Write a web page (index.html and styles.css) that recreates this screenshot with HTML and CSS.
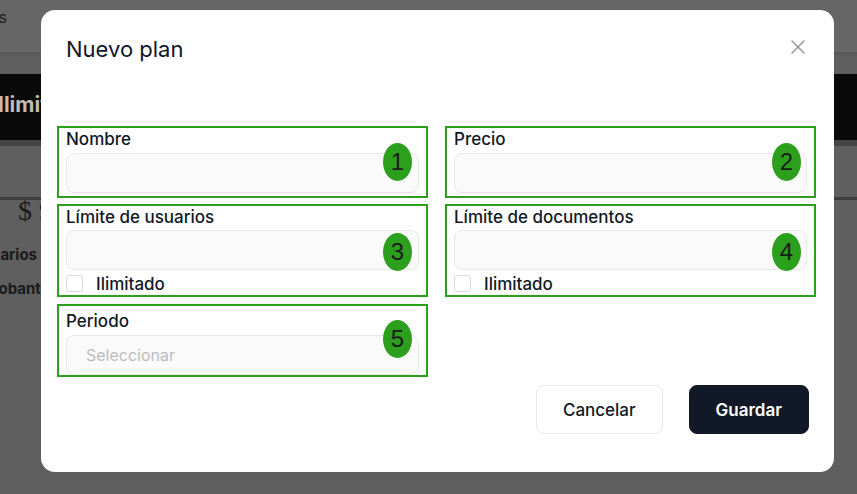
FILE: index.html
```html
<!DOCTYPE html>
<html lang="es">
<head>
<meta charset="utf-8">
<title>Nuevo plan</title>
<link rel="stylesheet" href="styles.css">
</head>
<body>
<div class="page">
  <header class="nav">
    <div class="nav-clip"><span>Planes</span></div>
  </header>
  <section class="card">
    <div class="card-head"><span class="card-title">Ilimitado</span></div>
    <div class="card-body">
      <div class="price">$ 99</div>
      <div class="feat feat-users"><span>Usuarios</span></div>
      <div class="feat feat-docs"><span>Comprobantes</span></div>
    </div>
  </section>
</div>

<div class="modal" role="dialog" aria-labelledby="modal-title">
  <div class="modal-header">
    <h2 id="modal-title" class="modal-title">Nuevo plan</h2>
    <button class="close-btn" aria-label="Cerrar">
      <svg width="14" height="14" viewBox="0 0 14 14" aria-hidden="true">
        <path d="M1 1 L13 13 M13 1 L1 13" stroke="#8a8f98" stroke-width="1.3" fill="none" stroke-linecap="round"/>
      </svg>
    </button>
  </div>

  <form class="form-grid">
    <div class="field">
      <label class="field-label">Nombre</label>
      <input class="text-input" type="text">
      <span class="badge">1</span>
    </div>
    <div class="field field-right">
      <label class="field-label">Precio</label>
      <input class="text-input" type="text">
      <span class="badge">2</span>
    </div>
    <div class="field field-limit">
      <label class="field-label">Límite de usuarios</label>
      <input class="text-input" type="text">
      <label class="check-row"><input type="checkbox" class="check"><span>Ilimitado</span></label>
      <span class="badge badge-low">3</span>
    </div>
    <div class="field field-limit field-right">
      <label class="field-label">Límite de documentos</label>
      <input class="text-input" type="text">
      <label class="check-row"><input type="checkbox" class="check"><span>Ilimitado</span></label>
      <span class="badge badge-low">4</span>
    </div>
    <div class="field field-select">
      <label class="field-label">Periodo</label>
      <div class="text-input select-input">Seleccionar</div>
      <span class="badge">5</span>
    </div>
  </form>

  <div class="modal-footer">
    <button class="btn btn-outline">Cancelar</button>
    <button class="btn btn-primary">Guardar</button>
  </div>
</div>
</body>
</html>
```

FILE: styles.css
```css
* { box-sizing: border-box; }

html, body {
  margin: 0;
  height: 494px;
  overflow: hidden;
}

body {
  background: #5f5f5f;
  font-family: Inter, "Noto Sans", sans-serif;
}

/* ---------- dimmed page behind the dialog ---------- */
.nav {
  height: 55px;
  background: #666666;
  border-bottom: 3px solid #595959;
}

.nav-clip {
  width: 7px;
  overflow: hidden;
  display: flex;
  justify-content: flex-end;
  padding-top: 7px;
  font-size: 16px;
  line-height: 20px;
  color: #1f1f1f;
  white-space: nowrap;
}

.card {
  margin-top: 19px;
}

.card-head {
  height: 72px;
  background: #0a0a0a;
  border-bottom: 6px solid #454545;
  display: flex;
  align-items: center;
  padding-bottom: 6px;
}

.card-title {
  margin-left: -2px;
  font-weight: 700;
  font-size: 21px;
  color: #c2bbb6;
  white-space: nowrap;
}

.card-body {
  margin-top: 51px;
  border-top: 3px solid #3d3d3d;
}

.price {
  padding-left: 18px;
  font-family: "Liberation Serif", serif;
  font-size: 28px;
  line-height: 22px;
  color: #1b1b1b;
  margin-bottom: 16px;
}

.feat {
  overflow: hidden;
  display: flex;
  justify-content: flex-end;
  font-weight: 700;
  font-size: 15px;
  line-height: 34px;
  color: #1a1a1a;
  white-space: nowrap;
}

.feat-users { width: 37px; }
.feat-docs { width: 58px; }

/* ---------- dialog ---------- */
.modal {
  position: fixed;
  left: 41px;
  top: 10px;
  width: 793px;
  height: 462px;
  background: #ffffff;
  border-radius: 14px;
  padding: 25px 25px 0;
}

.modal-header {
  display: flex;
  justify-content: space-between;
  align-items: flex-start;
  height: 28px;
}

.modal-title {
  margin: 0;
  font-size: 22px;
  line-height: 28px;
  font-weight: 400;
  color: #0f172a;
}

.close-btn {
  width: 24px;
  height: 24px;
  margin-right: -1px;
  padding: 0;
  border: 0;
  background: transparent;
  display: flex;
  align-items: center;
  justify-content: center;
}

.form-grid {
  margin: 63px -7px 0 -9px;
  display: grid;
  grid-template-columns: 1fr 1fr;
  column-gap: 17px;
  row-gap: 6px;
}

.field {
  position: relative;
  border: 2px solid #2ca01c;
  padding: 1px 7px 3px;
  display: flex;
  flex-direction: column;
}

.field-label {
  font-size: 17px;
  line-height: 20px;
  font-weight: 500;
  color: #111827;
  margin-bottom: 4px;
}

.text-input {
  width: 100%;
  height: 40px;
  border: 1px solid #e5e7eb;
  border-radius: 8px;
  background: #fafafa;
  font-family: inherit;
  font-size: 16px;
  outline: none;
}

.field-limit .field-label { margin-bottom: 3px; }

.check-row {
  margin-top: 5px;
  height: 17px;
  display: flex;
  align-items: center;
  gap: 13px;
  font-size: 17px;
  font-weight: 500;
  color: #111827;
}

.check {
  appearance: none;
  -webkit-appearance: none;
  margin: 0;
  width: 17px;
  height: 17px;
  border: 1px solid #d9dbe0;
  border-radius: 3px;
  background: #ffffff;
}

.field-select {
  margin-top: 1px;
  padding-top: 5px;
  padding-bottom: 0;
}

.select-input {
  display: flex;
  align-items: center;
  padding-left: 19px;
  color: #bdbdbd;
}

.badge {
  position: absolute;
  top: 15px;
  right: 14px;
  width: 29px;
  height: 38px;
  border-radius: 50%;
  background: #2ca01c;
  display: flex;
  align-items: center;
  justify-content: center;
  font-family: "Liberation Sans", Arial, sans-serif;
  font-size: 24px;
  color: #1c1c1c;
}

.field-right .badge { right: 13px; }
.badge-low { top: 27px; }
.field-select .badge { top: 14px; }

.modal-footer {
  margin-top: 8px;
  display: flex;
  justify-content: flex-end;
  gap: 26px;
}

.btn {
  height: 49px;
  padding: 0 26px;
  border-radius: 8px;
  font-family: inherit;
  font-size: 17px;
  font-weight: 500;
  cursor: pointer;
}

.btn-outline {
  background: #ffffff;
  border: 1px solid #e5e7eb;
  color: #111827;
}

.btn-primary {
  background: #111827;
  border: 1px solid #111827;
  color: #ffffff;
  font-weight: 600;
}
```
